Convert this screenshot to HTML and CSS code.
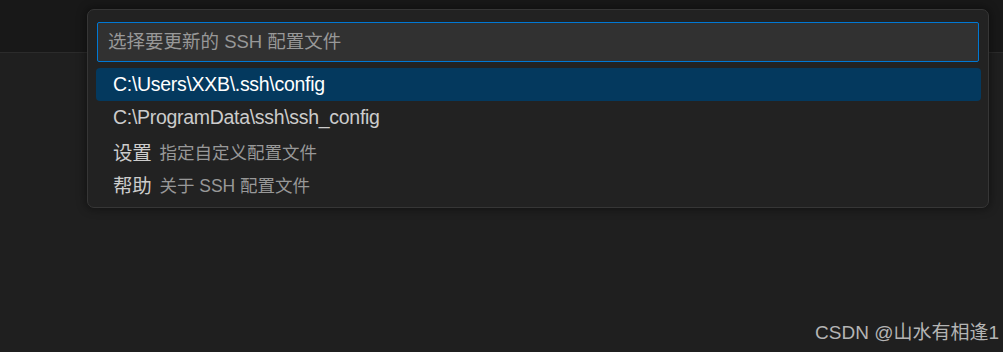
FILE: index.html
```html
<!DOCTYPE html>
<html lang="zh-CN">

<head>
    <meta charset="UTF-8">
    <meta name="viewport" content="width=device-width, initial-scale=1.0">
    <title>SSH 配置文件</title>
    <link rel="stylesheet" href="styles.css">
</head>

<body>
    <div class="titlebar"></div>
    <div class="editor">
        <div class="quick-input">
            <div class="quick-input__box">
                <input type="text" placeholder="选择要更新的 SSH 配置文件">
            </div>
            <ul class="quick-input__list">
                <li class="item item--active"><span class="item__label">C:\Users\XXB\.ssh\config</span></li>
                <li class="item"><span class="item__label">C:\ProgramData\ssh\ssh_config</span></li>
                <li class="item"><span class="item__label">设置</span><span class="item__desc">指定自定义配置文件</span></li>
                <li class="item"><span class="item__label">帮助</span><span class="item__desc">关于 SSH 配置文件</span></li>
            </ul>
        </div>
        <div class="watermark">CSDN @山水有相逢1</div>
    </div>
</body>

</html>
```

FILE: styles.css
```css
* {
    margin: 0;
    padding: 0;
    box-sizing: border-box;
}

body {
    background: #1f1f1f;
    height: 100vh;
    font-family: "Liberation Sans", "Noto Sans CJK SC", sans-serif;
    font-size: 16px;
    display: flex;
    flex-direction: column;
}

.titlebar {
    height: 53px;
    background: #181818;
    border-bottom: 1px solid #2b2b2b;
}

.editor {
    flex: 1;
    position: relative;
}

.quick-input {
    position: absolute;
    top: -44px;
    left: 87px;
    width: 902px;
    height: 199px;
    background: #222222;
    border: 1px solid #363636;
    border-radius: 7px;
    box-shadow: 0 0 8px 2px rgba(0, 0, 0, 0.36);
    padding: 12px 9px 0 9px;
}

.quick-input__box input {
    display: block;
    width: 882px;
    height: 40px;
    background: #313131;
    border: 1px solid #0078d4;
    border-radius: 2px;
    padding: 0 10px;
    font-family: "Liberation Sans", "Noto Sans CJK SC", sans-serif;
    font-size: 18.5px;
    color: #cccccc;
    outline: none;
}

.quick-input__box input::placeholder {
    color: #989898;
}

.quick-input__list {
    list-style: none;
    margin: 6px 0 0 -1px;
    width: 885px;
}

.item {
    height: 33.3px;
    display: flex;
    align-items: center;
    padding-left: 17px;
    color: #cccccc;
    font-size: 19.5px;
    border-radius: 4px;
}

.item--active {
    background: #04395e;
    color: #ffffff;
}

.item__label {
    letter-spacing: -0.3px;
}

.item__desc {
    margin-left: 8px;
    font-size: 17.5px;
    color: #989898;
}

.watermark {
    position: absolute;
    right: 4px;
    bottom: 8px;
    font-size: 19px;
    color: #b4b4b4;
}
```
